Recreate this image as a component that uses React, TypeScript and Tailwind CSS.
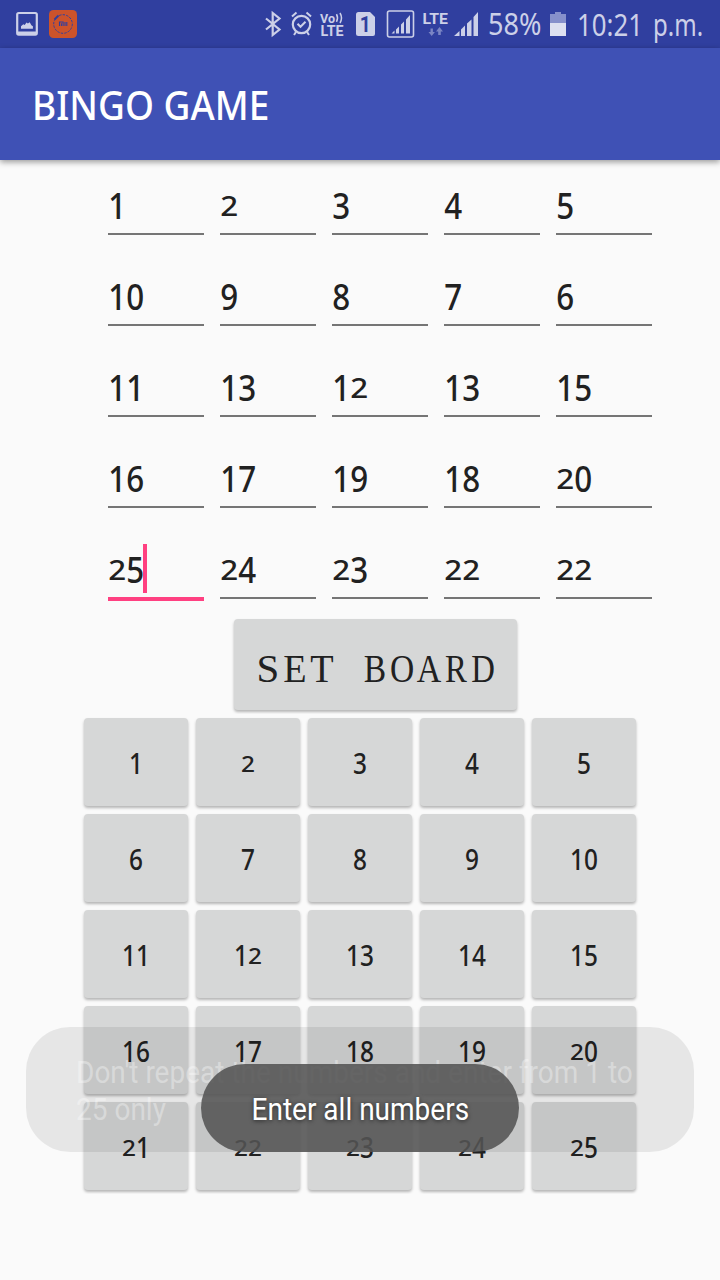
import React from "react";

const entries = [
  ["1", "2", "3", "4", "5"],
  ["10", "9", "8", "7", "6"],
  ["11", "13", "12", "13", "15"],
  ["16", "17", "19", "18", "20"],
  ["25", "24", "23", "22", "22"],
];

const board = Array.from({ length: 25 }, (_, i) => String(i + 1));

const labelLetters = [
  { char: "S", shape: "scale-x-[1.05]" },
  { char: "E", shape: "scale-x-[0.98]" },
  { char: "T", shape: "scale-x-[0.98]" },
  { char: " ", shape: "" },
  { char: "B", shape: "scale-x-[0.86]" },
  { char: "O", shape: "scale-x-[0.86]" },
  { char: "A", shape: "scale-x-[0.87]" },
  { char: "R", shape: "scale-x-[0.84]" },
  { char: "D", shape: "scale-x-[0.84]" },
];

// Old-style figures: the 2 sits lower and is shorter than the others.
function Figures({ value }: { value: string }) {
  return (
    <>
      {value.split("").map((c, i) => (
        <span
          key={i}
          className={
            c === "2"
              ? "relative -top-[0.09em] inline-block w-[0.5em] origin-bottom scale-y-[0.76] text-center leading-none"
              : "inline-block w-[0.5em] text-center leading-none"
          }
        >
          <span className="-mx-[0.1em] inline-block scale-x-[0.87]">{c}</span>
        </span>
      ))}
    </>
  );
}

function StatusBar() {
  return (
    <header className="flex h-12 w-full bg-[#303f9f] text-[#ccd0e8]">
      <svg width="84" height="48" viewBox="0 0 84 48" className="shrink-0">
        <rect x="17.2" y="13" width="19.6" height="21.6" rx="1.5" fill="none" stroke="#ccd0e8" strokeWidth="2.2" />
        <path d="M17 31.5h20v3H17z" fill="#ccd0e8" />
        <path d="M21 28.8v-2.6l2.3-2 1.4.8 1.8-2.6 1.4 1 1.8-1.2 1.7 3 1.5 1v2.6z" fill="#ccd0e8" />
        <rect x="49" y="10" width="28" height="28" rx="4.5" fill="#cc532b" />
        <circle cx="63" cy="24" r="9.3" fill="none" stroke="#303f9f" strokeWidth="1" strokeDasharray="2.4 1.2" />
        <path d="M54.5 19.5l4-4" stroke="#303f9f" strokeWidth="2" />
        <path d="M59.5 26v-4h3.6v4M61.4 23.2V26M65 22v4M66.8 22v4" fill="none" stroke="#303f9f" strokeWidth="1.1" />
      </svg>
      <svg width="264" height="48" viewBox="220 0 264 48" className="ml-[136px] shrink-0" fill="none" stroke="#ccd0e8">
        <path d="M266 18.5l13.5 11-6.8 5.5V13l6.8 5.5L266 29.5" strokeWidth="2.2" />
        <circle cx="301.5" cy="24.5" r="8.7" strokeWidth="2.2" />
        <path d="M297.500 23.800l3 3 5-5M292 16.500l4.500-4M311 16.500l-4.500-4M296 32l-2 3M307 32l2 3" strokeWidth="2" />
        <g fill="#ccd0e8" stroke="none" fontFamily="Roboto, sans-serif" fontWeight="700">
          <text x="320" y="22.500" fontSize="13" textLength="15" lengthAdjust="spacingAndGlyphs">Vo</text>
          <text x="320.500" y="36" fontSize="14" textLength="23" lengthAdjust="spacingAndGlyphs">LTE</text>
          <text x="422.500" y="24" fontSize="15.500" textLength="25.500" lengthAdjust="spacingAndGlyphs">LTE</text>
        </g>
        <path d="M336.500 14.200q2 3.800 0 7.600M340 13q3 5 0 10" strokeWidth="1.500" />
        <path d="M358.500 12H370l5 5v17a2 2 0 0 1-2 2h-14.500a2.500 2.500 0 0 1-2.500-2.500v-19A2.500 2.500 0 0 1 358.500 12z" fill="#ccd0e8" stroke="none" />
        <text x="359.700" y="32" fontSize="22" fontFamily="Roboto, sans-serif" fontWeight="700" fill="#303f9f" stroke="none" textLength="11" lengthAdjust="spacingAndGlyphs">1</text>
        <rect x="387.500" y="11" width="26" height="26" rx="2" strokeWidth="1.600" />
        <g fill="#ccd0e8" stroke="none">
          <path d="M391.500 33.500l3-3v3zM396 29.500l3-3v7h-3zM401 24.500l3-3v12h-3zM406 19.500l4-4.500v18.500h-4z" />
          <path d="M454 36l5.500-5v5zM461 29.500l4-4V36h-4zM467 23.500l4.500-4V36H467zM473.500 17l4.500-5v24h-4.500z" />
        </g>
        <path d="M430.500 28.500v3.500h-2l3.200 4 3.200-4h-2v-3.500zM438.200 35v-3.500h-2.200l3.500-4.500 3.500 4.500h-2.200V35z" fill="#7b85c4" stroke="none" />
      </svg>
      <div className="flex items-center font-['Noto_Sans','Open_Sans',sans-serif] text-[30px] leading-none">
        <div className="w-[66px] whitespace-nowrap pl-1">
          <span className="inline-block origin-left scale-x-[0.9]">58%</span>
        </div>
      </div>
      <svg width="16" height="48" viewBox="0 0 16 48" className="shrink-0">
        <path d="M5 12h6v2h5v10H0V14h5z" fill="#8690cb" />
        <path d="M0 23h16v13H0z" fill="#dde0f0" />
      </svg>
      <div className="flex items-center pl-[11px] pt-0.5 font-['Noto_Sans','Open_Sans',sans-serif] text-[30px] leading-none">
        <span className="w-[76px] origin-left scale-x-[0.86] whitespace-nowrap">10:21</span>
        <span className="origin-left scale-x-[0.8] whitespace-nowrap">p.m.</span>
      </div>
    </header>
  );
}

export default function App() {
  return (
    <div className="relative flex h-[1280px] w-[720px] flex-col overflow-hidden bg-[#fafafa] font-['Noto_Sans','Open_Sans',sans-serif] text-[#212121]">
      <StatusBar />
      <div className="z-10 flex h-28 items-center bg-[#3f51b5] pl-8 pt-0.5 shadow-[0_2px_6px_rgba(0,0,0,0.4)]">
        <h1 className="origin-left scale-x-[0.925] whitespace-nowrap text-[40px] font-medium leading-none text-white">BINGO GAME</h1>
      </div>

      <div className="flex flex-col pl-[108px]">
        {entries.map((row, r) => (
          <div key={r} className={r === 0 ? "flex h-[73px] gap-4" : "flex h-[91px] gap-4"}>
            {row.map((v, c) => {
              const focused = r === 4 && c === 0;
              return (
                <div
                  key={c}
                  className={
                    focused
                      ? "-mb-1 flex w-24 items-end border-b-4 border-[#ff4081] pb-1"
                      : "-mb-0.5 flex w-24 items-end border-b-2 border-[#757575] pb-1"
                  }
                >
                  <div className="flex h-[49px] items-center">
                    <span className="whitespace-nowrap pt-0.5 text-[36px] font-medium leading-none">
                      <Figures value={v} />
                    </span>
                    {focused && <span className="-ml-px h-[49px] w-1 bg-[#ff4081]" />}
                  </div>
                </div>
              );
            })}
          </div>
        ))}
      </div>

      <div className="mt-[14px] flex h-[103px] justify-center overflow-hidden pl-[31px] pt-2">
        <button className="flex h-[91px] w-[283px] items-center justify-center rounded-[4px] bg-[#d6d7d7] pt-2 font-['Liberation_Serif',serif] text-[39px] leading-none text-[#212121] shadow-[0_2px_3px_rgba(0,0,0,0.28)]">
          {labelLetters.map(({ char, shape }, i) => (
            <span key={i} className="flex w-[26.9px] justify-center whitespace-pre">
              <span className={shape}>{char}</span>
            </span>
          ))}
        </button>
      </div>

      <div className="grid grid-cols-[repeat(5,104px)] gap-2 overflow-hidden px-[84px] pb-1 pt-1">
        {board.map((n) => (
          <button
            key={n}
            className="flex h-[88px] items-center justify-center rounded-[4px] bg-[#d6d7d7] pt-0.5 text-[28px] font-medium leading-none shadow-[0_2px_3px_rgba(0,0,0,0.28)]"
          >
            <span className="whitespace-nowrap">
              <Figures value={n} />
            </span>
          </button>
        ))}
      </div>

      <div className="absolute left-[26px] top-[1027px] flex h-[125px] w-[668px] items-center rounded-[44px] bg-black/8 pl-[50px] pt-[3px] font-['Roboto',sans-serif] text-[32px] leading-[37.5px] text-white/35">
        <p className="origin-left scale-x-[0.875] whitespace-nowrap">
          Don't repeat the numbers and enter from 1 to
          <br />
          25 only
        </p>
      </div>
      <div className="absolute left-[201px] top-[1064px] flex h-[88px] w-[318px] items-center justify-center rounded-full bg-[#545454]/88 pt-0.5 font-['Roboto',sans-serif] text-[32px] leading-none text-white">
        <span className="scale-x-[0.875] whitespace-nowrap [text-shadow:0_1px_5px_rgba(0,0,0,0.6)]">Enter all numbers</span>
      </div>
    </div>
  );
}
